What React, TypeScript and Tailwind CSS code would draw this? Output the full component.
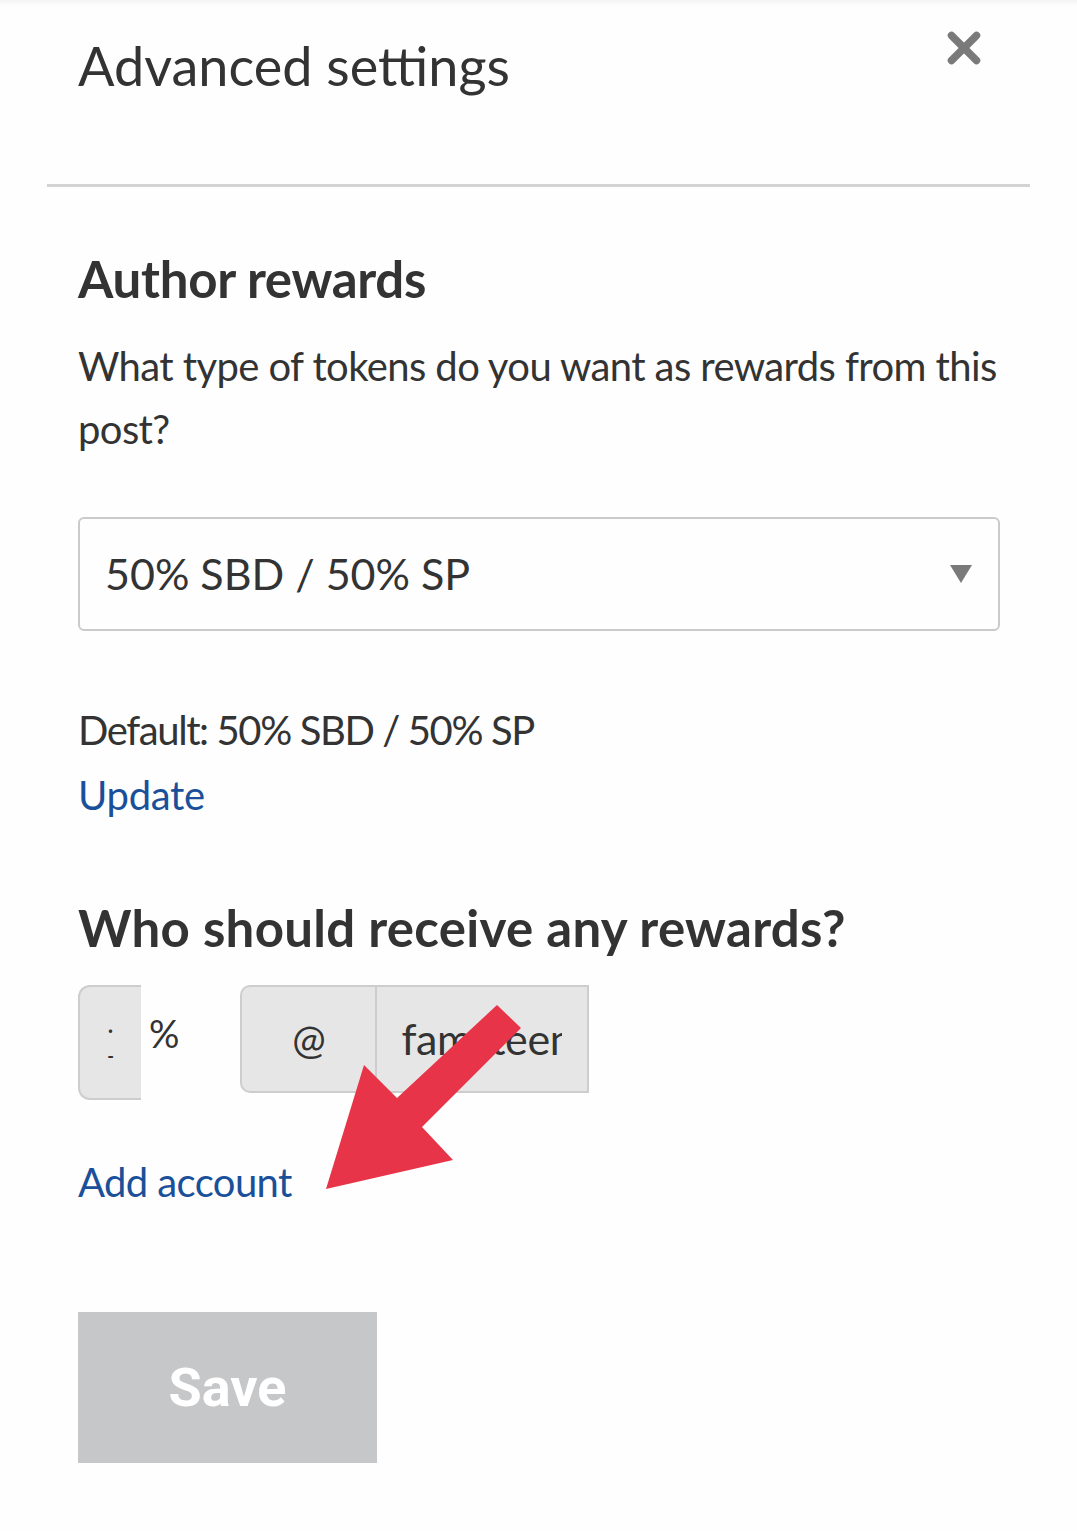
import { X } from 'lucide-react';

const body = "font-['Lato','Liberation_Sans',sans-serif]";

const Arrow = () => (
  <svg
    className="pointer-events-none absolute left-0 top-0"
    width="1077"
    height="1531"
    viewBox="0 0 1077 1531"
  >
    <polygon
      points="326,1189 364,1065 397,1098 497,1005 521,1028 422,1127 453,1160"
      fill="#e73448"
    />
  </svg>
);

export default function App() {
  return (
    <div className={`relative min-h-screen w-[1077px] bg-[#fefefe] text-[#333] ${body}`}>
      <div className="h-[6px] bg-gradient-to-b from-[#f4f4f4] to-[#fefefe]" />

      {/* header */}
      <div className="flex h-[178px] items-start justify-between pl-[78px] pr-[88px]">
        <h1 className="mt-[28px] text-[54px] leading-[64px] font-normal">Advanced settings</h1>
        <button className="mt-[17px] text-[#7a7a7a]">
          <X size={50} strokeWidth={3.6} />
        </button>
      </div>
      <div className="mx-[47px] h-[3px] bg-[#d3d3d3]" />

      <div className="px-[78px]">
        <h2 className="mt-[62px] text-[51px] leading-[60px] font-bold tracking-[-0.3px]">Author rewards</h2>
        <p className="mt-[26px] w-[922px] text-[40px] leading-[63px] tracking-[-0.6px]">
          What type of tokens do you want as rewards from this post?
        </p>

        <div className="mt-[56px] flex h-[114px] w-[922px] items-center justify-between rounded-md border-2 border-[#cacaca] pl-[25px] pr-[26px]">
          <span className="text-[43px]">50% SBD / 50% SP</span>
          <svg width="22" height="18" viewBox="0 0 22 18">
            <polygon points="0,0 22,0 11,18" fill="#7a7a7a" />
          </svg>
        </div>

        <p className="mt-[67px] text-[40px] leading-[65px] tracking-[-1.4px]">Default: 50% SBD / 50% SP</p>
        <p className="text-[40px] leading-[65px] tracking-[-0.3px] text-[#1a5099]">Update</p>

        <h2 className="mt-[70px] text-[51px] leading-[60px] font-bold tracking-[0.3px]">
          Who should receive any rewards?
        </h2>

        <div className="mt-[27px] flex items-start">
          <div className="flex h-[115px] w-[63px] flex-col items-center justify-center rounded-l-[12px] border-2 border-r-0 border-[#cdcdcd] bg-[#e6e6e6] text-[18px] leading-[26px] font-bold">
            <span>·</span>
            <span>-</span>
          </div>
          <span className="ml-[8px] mt-[26px] text-[38px] leading-[44px]">%</span>
          <div className="ml-[61px] flex h-[108px] w-[349px]">
            <div className="flex w-[135px] items-center justify-center rounded-l-[10px] border-2 border-r-0 border-[#cdcdcd] bg-[#e6e6e6] text-[40px]">
              @
            </div>
            <div className="flex flex-1 items-center overflow-hidden border-2 border-[#cdcdcd] bg-[#e6e6e6] pl-[24px] pr-[25px]">
              <span className="block overflow-hidden whitespace-nowrap text-[43px] tracking-[-0.4px]">famsteemit</span>
            </div>
          </div>
        </div>

        <p className="mt-[50px] text-[40px] leading-[65px] tracking-[-0.6px] text-[#1a5099]">Add account</p>

        <button className="mt-[97px] flex h-[151px] w-[299px] items-center justify-center bg-[#c6c7c9] font-['Roboto',sans-serif] text-[54px] font-bold text-white">
          Save
        </button>
      </div>

      <Arrow />
    </div>
  );
}
